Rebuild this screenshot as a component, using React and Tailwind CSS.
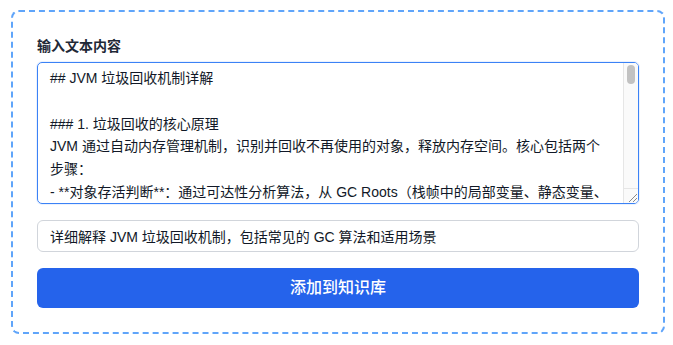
import React, { useEffect, useRef } from "react";

const content = `## JVM 垃圾回收机制详解

### 1. 垃圾回收的核心原理
JVM 通过自动内存管理机制，识别并回收不再使用的对象，释放内存空间。核心包括两个步骤：
- **对象存活判断**：通过可达性分析算法，从 GC Roots（栈帧中的局部变量、静态变量、常量引用等）出发，标记所有可达对象，不可达对象即为垃圾。
- **内存回收**：根据不同的垃圾回收算法清理垃圾对象，整理内存空间。

### 2. 常见的垃圾回收算法
- **标记-清除（Mark-Sweep）**：先标记存活对象，再清除未标记对象。缺点是会产生内存碎片。
- **复制算法（Copying）**：将内存分为两块，每次只使用其中一块，回收时将存活对象复制到另一块。适用于新生代。
- **标记-整理（Mark-Compact）**：标记存活对象后，将其向一端移动，然后清理边界以外的内存。适用于老年代。
- **分代收集（Generational）**：根据对象存活周期将内存划分为新生代和老年代，分别采用不同算法。

### 3. 常见的垃圾收集器
- **Serial**：单线程收集器，适用于客户端应用。
- **Parallel**：多线程并行收集，注重吞吐量。
- **CMS**：以最短停顿时间为目标，采用标记-清除算法。
- **G1**：面向服务端，将堆划分为多个 Region，可预测停顿时间。
- **ZGC**：低延迟收集器，停顿时间不超过 10ms。

### 4. 适用场景
- 小型应用或单核环境：Serial
- 后台批处理、注重吞吐量：Parallel
- 响应时间敏感的 Web 应用：CMS / G1
- 超大堆内存、低延迟要求：ZGC
`;

export default function App() {
  const ref = useRef(null);
  useEffect(() => {
    const el = ref.current;
    if (!el) return;
    const idx = content.indexOf("步骤：") + 3;
    el.focus({ preventScroll: true });
    el.setSelectionRange(idx, idx);
    el.scrollTop = 0;
  }, []);
  return (
    <div className="bg-white w-[673px] h-[345px] pt-[10px] pl-[11px] font-['Liberation_Sans','Noto_Sans_CJK_SC',sans-serif]">
      <div className="w-[654px] h-[324px] border-2 border-dashed border-[#60a5fa] rounded-lg p-6 flex flex-col">
        <label className="text-sm leading-5 font-semibold text-[#1f2937] mb-1.5">输入文本内容</label>
        <div className="h-[142px] shrink-0 flex border border-[#3b82f6] rounded-[5px] overflow-hidden shadow-[0_0_0_1px_rgba(59,130,246,0.1)]">
          <textarea
            ref={ref}
            className="flex-1 min-w-0 h-full resize-none overflow-hidden pl-3 pr-3 py-1 text-sm leading-[22.75px] text-[#111827] outline-none caret-[#111827]"
            defaultValue={content}
          />
          <div className="w-[15px] shrink-0 flex flex-col bg-[#fafafa] border-l border-[#e6e6e6]">
            <div className="mt-[2px] mx-auto w-[8px] h-[19px] rounded-full bg-[#c2c2c2]" />
            <div className="flex-1" />
            <div className="h-[15px] border-t border-[#e6e6e6] flex items-end justify-end">
              <svg width="14" height="14" viewBox="0 0 14 14">
                <path d="M13 5 L5 13" stroke="#8a8a8a" strokeWidth="1" />
                <path d="M13 9 L9 13" stroke="#8a8a8a" strokeWidth="1" />
              </svg>
            </div>
          </div>
        </div>
        <input
          className="mt-4 w-full h-8 shrink-0 border border-[#d1d5db] rounded-md px-3 text-sm text-[#111827] outline-none"
          defaultValue="详细解释 JVM 垃圾回收机制，包括常见的 GC 算法和适用场景"
        />
        <button className="mt-4 w-full h-10 shrink-0 bg-[#2563eb] rounded-md text-white text-base font-medium">
          添加到知识库
        </button>
      </div>
    </div>
  );
}
